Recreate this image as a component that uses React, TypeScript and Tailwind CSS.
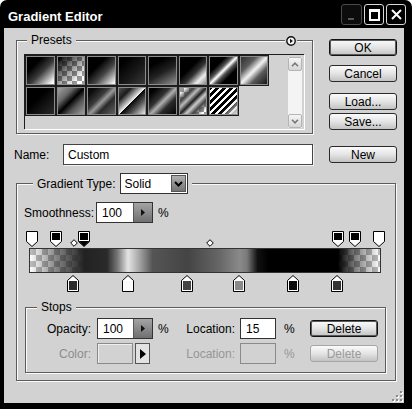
import React from "react";

const presetRow1 = [
  "bg-[linear-gradient(135deg,#000_30%,#3a3a3a_55%,#fff_92%)]",
  "bg-[image:linear-gradient(135deg,#000_5%,rgba(0,0,0,0.5)_40%,rgba(0,0,0,0)_80%),conic-gradient(#fff_25%,#9a9a9a_0_50%,#fff_0_75%,#9a9a9a_0)] bg-[length:100%_100%,10px_10px]",
  "bg-[linear-gradient(135deg,#000_35%,#444_60%,#fff_95%)]",
  "bg-[linear-gradient(135deg,#000_20%,#1a1a1a_60%,#3c3c3c_100%)]",
  "bg-[linear-gradient(150deg,#000_25%,#222_55%,#9a9a9a_100%)]",
  "bg-[linear-gradient(135deg,#000_40%,#333_58%,#eee_78%,#777_100%)]",
  "bg-[linear-gradient(135deg,#000_30%,#555_42%,#fff_50%,#555_58%,#000_70%)]",
  "bg-[linear-gradient(135deg,#2a2a2a_0%,#5a5a5a_30%,#f4f4f4_50%,#5a5a5a_68%,#111_100%)]",
];

const presetRow2 = [
  "bg-[linear-gradient(135deg,#000_40%,#2e2e2e_100%)]",
  "bg-[linear-gradient(135deg,#a8a8a8_0%,#6a6a6a_30%,#000_50%,#555_68%,#aaa_100%)]",
  "bg-[linear-gradient(135deg,#0a0a0a_15%,#3a3a3a_40%,#9a9a9a_52%,#2a2a2a_66%,#6a6a6a_100%)]",
  "bg-[linear-gradient(135deg,#5a5a5a_0%,#1c1c1c_25%,#eee_50%,#000_50%,#555_70%,#fff_100%)]",
  "bg-[linear-gradient(135deg,#000_15%,#333_40%,#b0b0b0_52%,#2a2a2a_68%,#000_100%)]",
  "bg-[image:linear-gradient(135deg,rgba(0,0,0,0)_12%,#444_28%,#bbb_38%,#222_50%,#ccc_60%,#444_72%,rgba(0,0,0,0)_88%),conic-gradient(#fff_25%,#9a9a9a_0_50%,#fff_0_75%,#9a9a9a_0)] bg-[length:100%_100%,10px_10px]",
  "bg-[image:linear-gradient(135deg,rgba(255,255,255,0)_65%,rgba(220,220,220,0.9)_90%),repeating-linear-gradient(135deg,#000_0_3px,#fff_3px_5px)]",
];

const opacityStops = [
  { left: -3, fill: "#fff" },
  { left: 21, fill: "#000" },
  { left: 49, fill: "#000", selected: true },
  { left: 303, fill: "#000" },
  { left: 320, fill: "#000" },
  { left: 344, fill: "#fff" },
];

const colorStops = [
  { left: 38, fill: "#2a2a2a" },
  { left: 93, fill: "#fafafa" },
  { left: 152, fill: "#444" },
  { left: 204, fill: "#8a8a8a" },
  { left: 258, fill: "#0a0a0a" },
  { left: 302, fill: "#333" },
];

function Btn({
  children,
  strong = false,
  disabled = false,
  className = "",
}: {
  children: React.ReactNode;
  strong?: boolean;
  disabled?: boolean;
  className?: string;
}) {
  return (
    <div
      className={`flex h-[17px] w-[68px] shrink-0 items-center justify-center rounded-[3px] border bg-gradient-to-b from-[#fbfbfb] via-[#e4e4e4] to-[#c2c2c2] text-[12px] ${
        disabled
          ? "border-[#a6a6a6] text-[#9a9a9a]"
          : strong
            ? "border-[#111] text-black shadow-[inset_0_0_0_1px_#5a5a5a]"
            : "border-[#2a2a2a] text-black"
      } ${className}`}
    >
      {children}
    </div>
  );
}

function SpinArrow() {
  return (
    <span className="flex w-[19px] items-center justify-center border-l border-[#555] bg-gradient-to-b from-[#a4a4a4] to-[#707070]">
      <svg width="4" height="7" viewBox="0 0 4 7">
        <path d="M0 0L4 3.5L0 7Z" fill="#111" />
      </svg>
    </span>
  );
}

function TopStop({ fill, selected = false }: { fill: string; selected?: boolean }) {
  return (
    <svg width="12" height="16" viewBox="0 0 12 16">
      <path d="M0.5 0.5H11.5V10.5L6 15.5L0.5 10.5Z" fill="#fff" stroke="#000" />
      <rect x="2" y="2" width="8" height="7" fill={fill} />
      {selected && <path d="M0.5 10H11.5L6 15.5Z" fill="#000" />}
    </svg>
  );
}

function BottomStop({ fill }: { fill: string }) {
  return (
    <svg width="12" height="17" viewBox="0 0 12 17">
      <path d="M6 0.5L11.5 5.5V16.5H0.5V5.5Z" fill="#fff" stroke="#000" />
      <rect x="2" y="6" width="8" height="9" fill={fill} />
    </svg>
  );
}

function Diamond() {
  return (
    <svg width="8" height="8" viewBox="0 0 8 8">
      <path d="M4 0.7L7.3 4L4 7.3L0.7 4Z" fill="#fff" stroke="#000" />
    </svg>
  );
}

function ScrollBtn({ up }: { up?: boolean }) {
  return (
    <div className="flex h-[14px] items-center justify-center rounded-[2px] border border-[#b4b4b4] bg-gradient-to-b from-[#f6f6f6] to-[#d6d6d6]">
      <svg width="8" height="5" viewBox="0 0 8 5">
        <path d={up ? "M1 4.2L4 1.2L7 4.2" : "M1 0.8L4 3.8L7 0.8"} fill="none" stroke="#777" strokeWidth="1.6" />
      </svg>
    </div>
  );
}

export default function App() {
  return (
    <div className="flex h-[409px] w-[412px] flex-col overflow-hidden rounded-t-[7px] bg-black font-['Liberation_Sans',Arial,sans-serif] text-[12px] leading-none text-black">
      {/* title bar */}
      <div className="flex h-[28px] shrink-0 items-center pl-[8px] pr-[6px]">
        <span className="pt-[5px] text-[13px] font-bold text-white">Gradient Editor</span>
        <div className="ml-auto mt-[1px] flex gap-[2px]">
          <div className="flex h-[21px] w-[21px] items-end rounded-[3px] border border-[#4a4a4a] bg-[#0c0c0c] pb-[4px] pl-[6px]">
            <div className="h-[2px] w-[6px] bg-[#555]" />
          </div>
          <div className="flex h-[21px] w-[20px] items-center justify-center rounded-[3px] border border-[#d8d8d8] bg-black">
            <div className="h-[12px] w-[11px] border-2 border-t-[3px] border-white" />
          </div>
          <div className="flex h-[21px] w-[20px] items-center justify-center rounded-[3px] border border-[#d8d8d8] bg-black">
            <svg width="11" height="11" viewBox="0 0 11 11">
              <path d="M1 1L10 10M10 1L1 10" stroke="#fff" strokeWidth="2" />
            </svg>
          </div>
        </div>
      </div>

      {/* dialog body */}
      <div className="relative mb-[6px] ml-[4px] mr-[8px] flex-1 bg-[#d2d2d2] pt-[5px]">
        <div className="flex">
          <div className="relative ml-[12px]">
            <fieldset className="h-[101px] w-[297px] border border-[#5c5c5c] shadow-[1px_1px_0_#fafafa,inset_1px_1px_0_#fafafa]">
              <legend className="ml-[10px] bg-[#d2d2d2] px-[4px] leading-[14px]">Presets</legend>
              <div className="ml-[7px] mt-[7px] flex h-[75px] w-[280px] border-l border-t border-[#1e1e1e] shadow-[1px_1px_0_#fff]">
                <div className="grid shrink-0 grid-cols-[repeat(8,30.5px)] content-start">
                  {[...presetRow1, ...presetRow2].map((c, i) => (
                    <div
                      key={i}
                      className={`h-[30.5px] w-[30.5px] border border-[#1c1c1c] shadow-[inset_0_0_0_1px_#8c8c8c] ${c}`}
                    />
                  ))}
                </div>
                <div className="ml-auto mr-[2px] mt-[2px] flex h-[71px] w-[14px] flex-col bg-[#f4f4f4]">
                  <ScrollBtn up />
                  <div className="flex-1" />
                  <ScrollBtn />
                </div>
              </div>
            </fieldset>
            <span className="absolute left-[269px] top-[3px] bg-[#d2d2d2] px-[1px]">
              <svg width="10" height="10" viewBox="0 0 10 10">
                <circle cx="5" cy="5" r="4.2" fill="#f2f2f2" stroke="#111" strokeWidth="1.4" />
                <path d="M4 2.8L6.8 5L4 7.2Z" fill="#111" />
              </svg>
            </span>
          </div>
          <div className="ml-[16px] mt-[6px] flex flex-col">
            <Btn strong>OK</Btn>
            <Btn className="mt-[9px]">Cancel</Btn>
            <Btn className="mt-[11px]">Load...</Btn>
            <Btn className="mt-[3px]">Save...</Btn>
          </div>
        </div>

        {/* name row */}
        <div className="mt-[10px] flex items-center">
          <span className="ml-[10px] w-[49px]">Name:</span>
          <div className="flex h-[21px] w-[250px] items-center border border-[#444] bg-white pl-[4px] shadow-[1px_1px_0_#f4f4f4]">
            Custom
          </div>
          <Btn className="ml-[16px]">New</Btn>
        </div>

        {/* gradient type group */}
        <fieldset className="ml-[12px] mt-[8px] h-[208px] w-[380px] border border-[#5c5c5c] shadow-[1px_1px_0_#fafafa,inset_1px_1px_0_#fafafa]">
          <legend className="ml-[16px] bg-[#d2d2d2] px-[4px]">
            <div className="flex items-center">
              <span>Gradient Type:</span>
              <div className="ml-[4px] flex h-[21px] w-[68px] items-center border border-[#333] bg-white">
                <span className="flex-1 pl-[4px]">Solid</span>
                <span className="mr-[1px] flex h-[17px] w-[15px] items-center justify-center border border-[#555] bg-gradient-to-b from-[#b0b0b0] to-[#747474]">
                  <svg width="9" height="6" viewBox="0 0 9 6">
                    <path d="M1 1L4.5 4.5L8 1" fill="none" stroke="#000" strokeWidth="2" />
                  </svg>
                </span>
              </div>
            </div>
          </legend>

          <div className="mt-[8px] flex items-center pl-[7px]">
            <span className="w-[72px]">Smoothness:</span>
            <div className="flex h-[21px] w-[57px] border border-[#333] bg-white">
              <span className="flex flex-1 items-center pl-[5px]">100</span>
              <SpinArrow />
            </div>
            <span className="ml-[5px]">%</span>
          </div>

          {/* gradient bar with stops */}
          <div className="relative ml-[12px] mt-[8px] h-[60px] w-[352px] pt-[17px]">
            {opacityStops.map((s, i) => (
              <div key={i} className="absolute top-0" style={{ left: s.left }}>
                <TopStop fill={s.fill} selected={s.selected} />
              </div>
            ))}
            <div className="absolute left-[41px] top-[8px]">
              <Diamond />
            </div>
            <div className="absolute left-[177px] top-[8px]">
              <Diamond />
            </div>
            <div className="h-[25px] border border-[#333] bg-[image:linear-gradient(90deg,rgba(34,34,34,0)_0%,rgba(34,34,34,0.55)_7.4%,#222_15.6%,#2a2a2a_22%,#777_25%,#e4e4e4_28%,#aaa_31%,#555_35%,#444_45%,#666_54%,#8a8a8a_60%,#7a7a7a_62%,#111_65%,#000_68%,#000_88%,rgba(0,0,0,0.5)_93%,rgba(0,0,0,0)_100%),conic-gradient(#fff_25%,#bdbdbd_0_50%,#fff_0_75%,#bdbdbd_0)] bg-[length:100%_100%,12px_12px]" />
            {colorStops.map((s, i) => (
              <div key={i} className="absolute top-[44px]" style={{ left: s.left }}>
                <BottomStop fill={s.fill} />
              </div>
            ))}
          </div>

          {/* stops group */}
          <fieldset className="ml-[8px] mt-[9px] h-[73px] w-[361px] border border-[#5c5c5c] shadow-[1px_1px_0_#fafafa,inset_1px_1px_0_#fafafa]">
            <legend className="ml-[11px] bg-[#d2d2d2] px-[4px] leading-[14px]">Stops</legend>
            <div className="mt-[4px] flex h-[21px] items-center">
              <span className="w-[65px] text-right">Opacity:</span>
              <div className="ml-[6px] flex h-[21px] w-[56px] border border-[#333] bg-white">
                <span className="flex flex-1 items-center pl-[5px]">100</span>
                <SpinArrow />
              </div>
              <span className="ml-[5px] w-[10px]">%</span>
              <span className="w-[67px] text-right">Location:</span>
              <div className="ml-[5px] flex h-[21px] w-[36px] items-center border border-[#333] bg-white pl-[5px]">15</div>
              <span className="ml-[8px] w-[10px]">%</span>
              <Btn strong className="ml-[16px]">
                Delete
              </Btn>
            </div>
            <div className="mt-[4px] flex h-[21px] items-center">
              <span className="w-[65px] text-right text-[#8c8c8c]">Color:</span>
              <div className="ml-[6px] flex h-[21px] w-[56px] items-center">
                <div className="h-[21px] w-[36px] border border-[#8a8a8a] bg-[#d2d2d2] shadow-[inset_1px_1px_0_#eee]" />
                <div className="ml-[2px] flex h-[21px] w-[15px] items-center justify-center border border-[#555] bg-[#e2e2e2]">
                  <svg width="6" height="10" viewBox="0 0 6 10">
                    <path d="M0 0L6 5L0 10Z" fill="#000" />
                  </svg>
                </div>
              </div>
              <span className="ml-[5px] w-[10px]" />
              <span className="w-[67px] text-right text-[#969696]">Location:</span>
              <div className="ml-[5px] h-[21px] w-[36px] border border-[#8a8a8a] bg-[#d2d2d2]" />
              <span className="ml-[8px] w-[10px] text-[#969696]">%</span>
              <Btn disabled className="ml-[16px]">
                Delete
              </Btn>
            </div>
          </fieldset>
        </fieldset>

        {/* resize grip */}
        <svg className="absolute bottom-[1px] right-[1px]" width="12" height="12" viewBox="0 0 12 12">
          {[
            [9, 1],
            [9, 5],
            [5, 5],
            [9, 9],
            [5, 9],
            [1, 9],
          ].map(([x, y], i) => (
            <g key={i}>
              <rect x={x + 1} y={y + 1} width="2" height="2" fill="#fff" />
              <rect x={x} y={y} width="2" height="2" fill="#8a8a8a" />
            </g>
          ))}
        </svg>
      </div>
    </div>
  );
}
